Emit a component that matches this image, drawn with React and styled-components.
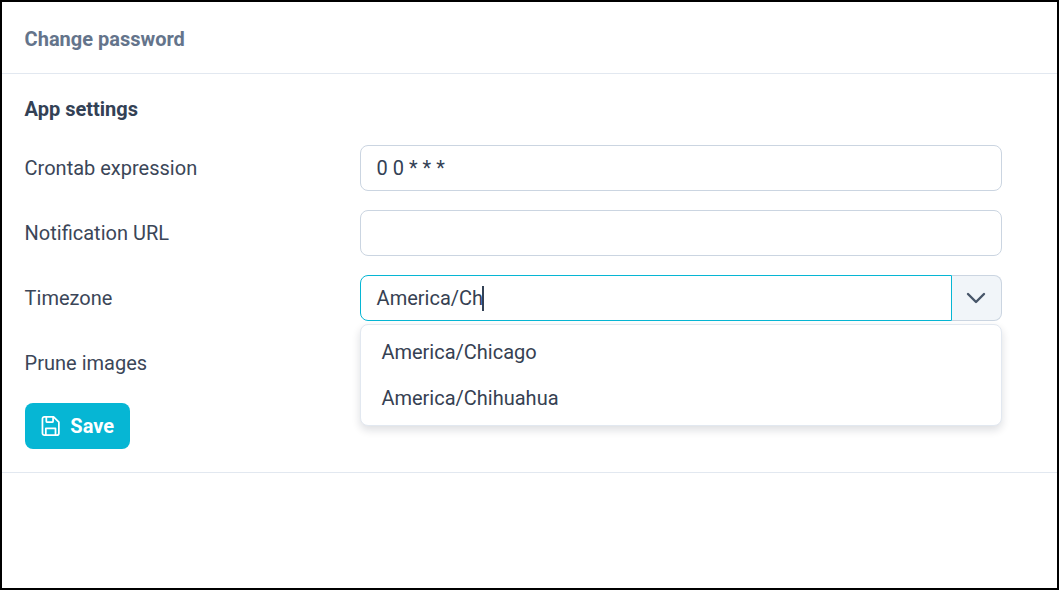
import styled, { createGlobalStyle } from 'styled-components';

const GlobalStyle = createGlobalStyle`
    html, body {
        margin: 0;
        padding: 0;
        background: white;
    }

    * {
        box-sizing: border-box;
    }
`

const Frame = styled.div`
    width: 1059px;
    height: 590px;
    border: 2px solid #000;
    background-color: white;
    font-family: Roboto, "Liberation Sans", sans-serif;
    font-size: 20px;
    color: #364152;
    overflow: hidden;
`

const CardHeader = styled.div`
    height: 72px;
    padding: 2px 22.6px 0;
    display: flex;
    align-items: center;
    border-bottom: 1px solid #e2e8f0;
    font-weight: 700;
    color: #64748b;
`

const Form = styled.form`
    padding: 20px 55px 23px 22.6px;
    border-bottom: 1px solid #e2e8f0;
`

const SectionTitle = styled.h3`
    margin: 0 0 21px;
    font-size: 20px;
    line-height: 30px;
    font-weight: 700;
    color: #334155;
`

const Row = styled.div`
    display: flex;
    align-items: center;
    height: 46px;
    margin-bottom: 19px;

    &:last-of-type {
        margin-bottom: 17px;
    }
`

const Label = styled.label`
    width: 335.4px;
    flex-shrink: 0;
    color: #3b4658;
`

const Input = styled.input`
    flex: 1;
    min-width: 0;
    height: 46px;
    padding: 0 15.6px;
    border: 1px solid #cbd5e1;
    border-radius: 8px;
    font: inherit;
    color: #334155;
    outline: none;
`

const ComboBox = styled.div`
    flex: 1;
    position: relative;
    display: flex;
    height: 46px;
`

const ComboValue = styled.div`
    flex: 1;
    display: flex;
    align-items: center;
    padding: 0 15.6px;
    border: 1px solid #06b6d4;
    border-radius: 8px 0 0 8px;
`

const Caret = styled.span`
    width: 2px;
    height: 25px;
    margin-left: -1px;
    background-color: #334155;
`

const ComboToggle = styled.button`
    width: 50px;
    display: flex;
    align-items: center;
    justify-content: center;
    padding: 0 2px 0 0;
    background-color: #f1f5f9;
    border: 1px solid #cbd5e1;
    border-left: none;
    border-radius: 0 8px 8px 0;
    color: #475569;
`

const Menu = styled.ul`
    position: absolute;
    top: 49px;
    left: 0;
    right: 0;
    margin: 0;
    padding: 4px 0;
    list-style: none;
    background-color: white;
    border: 1px solid #e2e8f0;
    border-radius: 8px;
    box-shadow: 0 4px 8px rgba(15, 23, 42, 0.14);
`

const MenuItem = styled.li`
    height: 46px;
    padding: 0 20.4px;
    display: flex;
    align-items: center;
`

const SaveButton = styled.button`
    display: flex;
    align-items: center;
    gap: 10px;
    width: 105px;
    height: 46px;
    margin-left: 0.4px;
    padding: 0 16px;
    border: none;
    border-radius: 8px;
    background-color: #06b6d4;
    color: white;
    font: inherit;
    font-weight: 700;
`

const Chevron = () => (
    <svg width="20" height="12" viewBox="0 0 20 12" fill="none" stroke="currentColor" strokeWidth="2.4" strokeLinecap="round" strokeLinejoin="round">
        <path d="M2 2l8 8 8-8" />
    </svg>
)

const FloppyIcon = () => (
    <svg width="20" height="22" viewBox="0 0 20 22" fill="none" stroke="currentColor" strokeWidth="1.8" strokeLinejoin="round">
        <path d="M3.5 1.5h9.5l5.5 5.5v11.5a2 2 0 0 1-2 2h-13a2 2 0 0 1-2-2v-15a2 2 0 0 1 2-2z" />
        <path d="M5.5 1.5v4.5a1 1 0 0 0 1 1h5a1 1 0 0 0 1-1v-4.5" />
        <path d="M5 20.5v-7h10v7" />
    </svg>
)

export default function App() {
    return (
        <Frame>
            <GlobalStyle />
            <CardHeader>Change password</CardHeader>
            <Form>
                <SectionTitle>App settings</SectionTitle>
                <Row>
                    <Label>Crontab expression</Label>
                    <Input defaultValue="0 0 * * *" />
                </Row>
                <Row>
                    <Label>Notification URL</Label>
                    <Input />
                </Row>
                <Row>
                    <Label>Timezone</Label>
                    <ComboBox>
                        <ComboValue>America/Ch<Caret /></ComboValue>
                        <ComboToggle type="button"><Chevron /></ComboToggle>
                        <Menu>
                            <MenuItem>America/Chicago</MenuItem>
                            <MenuItem>America/Chihuahua</MenuItem>
                        </Menu>
                    </ComboBox>
                </Row>
                <Row>
                    <Label>Prune images</Label>
                </Row>
                <SaveButton type="button"><FloppyIcon />Save</SaveButton>
            </Form>
        </Frame>
    )
}
